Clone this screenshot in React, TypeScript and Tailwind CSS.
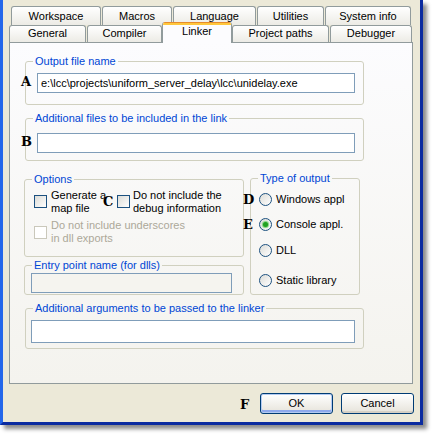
import React from "react";

const Tab = ({ label, className }: { label: string; className: string }) => (
  <div
    className={`flex justify-center shrink-0 border-t border-x border-[#919B9C] rounded-t-[3px] bg-gradient-to-b from-[#FFFFFF] to-[#ECEBE5] text-black ${className}`}
  >
    {label}
  </div>
);

const Group = ({
  label,
  className,
  children,
}: {
  label: string;
  className: string;
  children: React.ReactNode;
}) => (
  <fieldset className={`border border-[#D0D0BF] rounded-[3px] p-0 m-0 min-w-0 ${className}`}>
    <legend className="ml-[7px] px-[2px] text-[#0046D5] leading-[13px]">{label}</legend>
    {children}
  </fieldset>
);

const Check = ({ disabled, className }: { disabled?: boolean; className: string }) => (
  <div
    className={`w-[13px] h-[13px] shrink-0 border ${
      disabled
        ? "border-[#CAC8BB] bg-white"
        : "border-[#1C5180] bg-gradient-to-br from-[#DCDCD7] to-[#FFFFFF]"
    } ${className}`}
  />
);

const Radio = ({ checked }: { checked?: boolean }) => (
  <div className="w-[13px] h-[13px] shrink-0 rounded-full border border-[#1C5180] bg-gradient-to-br from-[#DCDCD7] to-[#FFFFFF] flex items-center justify-center">
    {checked && (
      <div className="w-[5px] h-[5px] rounded-full bg-[#21A121] shadow-[0_0_1px_1px_#7BD27B]" />
    )}
  </div>
);

const Letter = ({ ch, className }: { ch: string; className: string }) => (
  <span
    className={`absolute font-['DejaVu_Serif',serif] font-bold text-[13px] leading-[13px] text-black ${className}`}
  >
    {ch}
  </span>
);

export default function App() {
  return (
    <div className="relative w-[433px] h-[436px] bg-white overflow-hidden font-['Liberation_Sans',Arial,sans-serif] text-[11px] leading-[13px] text-black">
      {/* window */}
      <div className="w-[423px] h-[425px] border-l-[3px] border-r-[3px] border-b-[3px] border-l-[#2467EA] border-r-[#0B2BA0] border-b-[#0B2BA0] bg-[#ECE9D8] shadow-[4px_4px_4px_rgba(0,0,0,0.45)] flex flex-col">
        {/* tabs */}
        <div className="pt-[6px]">
          <div className="flex ml-[8px] h-[19px]">
            <Tab label="Workspace" className="w-[90px] h-[19px] items-center" />
            <Tab label="Macros" className="w-[70px] h-[19px] ml-[1px] items-center" />
            <Tab label="Language" className="w-[83px] h-[19px] ml-[1px] items-center" />
            <Tab label="Utilities" className="w-[67px] h-[19px] ml-[1px] items-center" />
            <Tab label="System info" className="w-[86px] h-[19px] ml-[1px] items-center" />
          </div>
          <div className="flex items-start ml-[6px] h-[17px]">
            <Tab label="General" className="w-[77px] h-[17px] pt-[1px]" />
            <Tab label="Compiler" className="w-[75px] h-[17px] ml-[1px] pt-[1px]" />
            <div className="relative z-10 -mt-[3px] w-[70px] h-[21px] shrink-0 border-x border-[#919B9C] rounded-t-[3px] overflow-hidden bg-[#FCFCFE] flex flex-col">
              <div className="h-[1px] bg-[#E68B2C]" />
              <div className="h-[2px] bg-[#FFC73C]" />
              <div className="text-center">Linker</div>
            </div>
            <Tab label="Project paths" className="w-[97px] h-[17px] pt-[1px]" />
            <Tab label="Debugger" className="w-[82px] h-[17px] ml-[1px] pt-[1px]" />
          </div>
        </div>

        {/* panel */}
        <div className="ml-[6px] w-[404px] h-[342px] border border-[#919B9C] bg-gradient-to-b from-[#FCFCFE] to-[#F4F3EE]">
          <Group label="Output file name" className="ml-[15px] mt-[12px] w-[339px]">
            <div className="pt-[5px] pb-[11px] pl-[11px] pr-[8px]">
              <input
                readOnly
                value="e:\lcc\projects\uniform_server_delay\lcc\unidelay.exe"
                className="block w-full h-[20px] border border-[#7F9DB9] bg-white px-[3px] outline-none"
              />
            </div>
          </Group>

          <Group label="Additional files to be included in the link" className="ml-[15px] mt-[7px] w-[339px]">
            <div className="pt-[8px] pb-[7px] pl-[11px] pr-[8px]">
              <input readOnly value="" className="block w-full h-[20px] border border-[#7F9DB9] bg-white px-[3px] outline-none" />
            </div>
          </Group>

          <div className="flex items-start ml-[14px] mt-[11px]">
            <div className="w-[220px] shrink-0">
              <Group label="Options" className="mt-[1px] w-[220px]">
                <div className="pt-[3px] pb-[11px] pl-[9px]">
                  <div className="flex h-[26px]">
                    <div className="flex w-[83px] shrink-0">
                      <Check className="mt-[6px]" />
                      <div className="ml-[4px]">
                        Generate a
                        <br />
                        map file
                      </div>
                    </div>
                    <div className="flex">
                      <Check className="mt-[6px]" />
                      <div className="ml-[3px]">
                        Do not include the
                        <br />
                        debug information
                      </div>
                    </div>
                  </div>
                  <div className="flex h-[26px] mt-[4px]">
                    <Check disabled className="mt-[7px]" />
                    <div className="ml-[4px] text-[#ACA899]">
                      Do not include underscores
                      <br />
                      in dll exports
                    </div>
                  </div>
                </div>
              </Group>
              <Group label="Entry point name (for dlls)" className="mt-[2px] w-[220px]">
                <div className="pt-[1px] pb-[1px] pl-[6px] pr-[11px]">
                  <div className="h-[20px] border border-[#7F9DB9] bg-[#F5F4EF]" />
                </div>
              </Group>
            </div>

            <Group label="Type of output" className="ml-[6px] w-[110px] shrink-0">
              <div className="pt-[8px] pb-[7px] pl-[8px]">
                <div className="flex items-center h-[13px]">
                  <Radio />
                  <span className="ml-[4px]">Windows appl</span>
                </div>
                <div className="flex items-center h-[13px] mt-[12px]">
                  <Radio checked />
                  <span className="ml-[4px]">Console appl.</span>
                </div>
                <div className="flex items-center h-[13px] mt-[13px]">
                  <Radio />
                  <span className="ml-[4px]">DLL</span>
                </div>
                <div className="flex items-center h-[13px] mt-[17px]">
                  <Radio />
                  <span className="ml-[4px]">Static library</span>
                </div>
              </div>
            </Group>
          </div>

          <Group label="Additional arguments to be passed to the linker" className="ml-[15px] mt-[7px] w-[339px]">
            <div className="pt-[5px] pb-[5px] pl-[5px] pr-[8px]">
              <input readOnly value="" className="block w-full h-[23px] border border-[#7F9DB9] bg-white px-[3px] outline-none" />
            </div>
          </Group>
        </div>

        {/* buttons */}
        <div className="mt-[9px] flex justify-end gap-[8px] pr-[6px]">
          <button className="w-[73px] h-[21px] rounded-[3px] border border-[#003C74] bg-gradient-to-b from-[#FFFFFF] to-[#E6E3DA] shadow-[inset_0_0_0_1px_#B3CBF2,inset_0_-2px_0_1px_#8EA9EC]">
            OK
          </button>
          <button className="w-[73px] h-[21px] rounded-[3px] border border-[#003C74] bg-gradient-to-b from-[#FFFFFF] to-[#E6E3DA] shadow-[inset_0_-2px_0_#D6D0C5]">
            Cancel
          </button>
        </div>
      </div>

      {/* annotation letters */}
      <Letter ch="A" className="left-[21px] top-[75px]" />
      <Letter ch="B" className="left-[21px] top-[135px]" />
      <Letter ch="C" className="left-[103px] top-[195px]" />
      <Letter ch="D" className="left-[243px] top-[193px]" />
      <Letter ch="E" className="left-[243px] top-[218px]" />
      <Letter ch="F" className="left-[240px] top-[398px]" />
    </div>
  );
}
